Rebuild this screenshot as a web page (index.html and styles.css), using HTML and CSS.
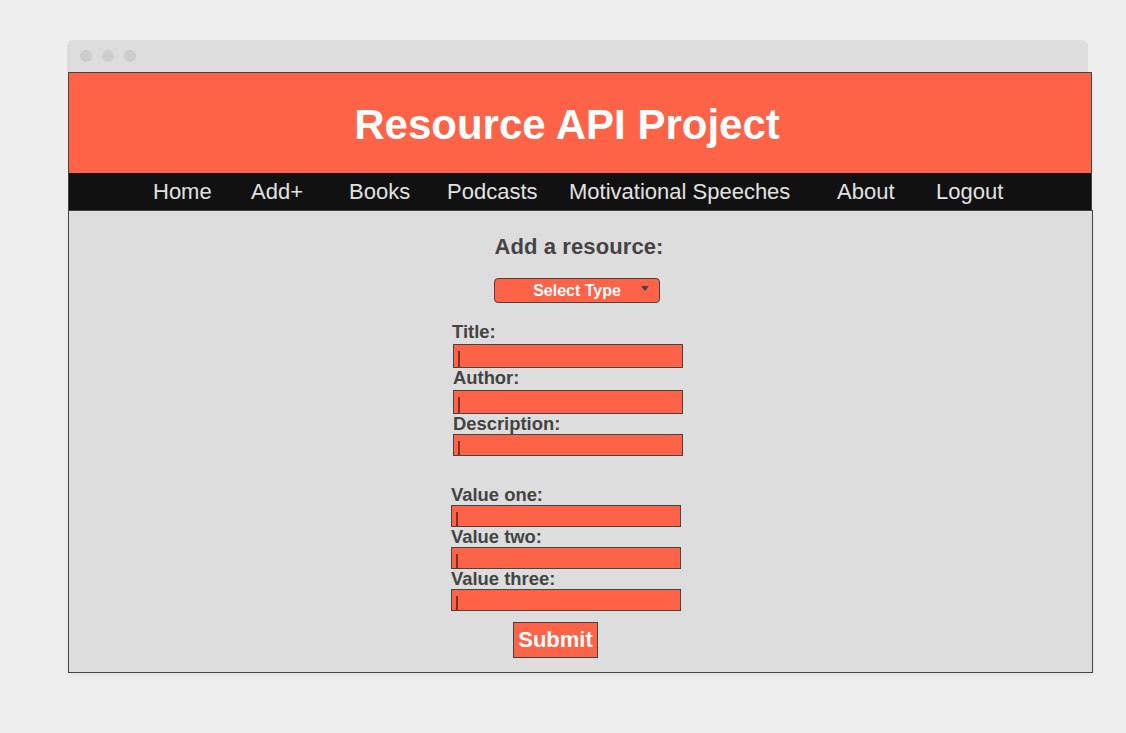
FILE: index.html
```html
<!DOCTYPE html>
<html lang="en">
<head>
<meta charset="utf-8">
<title>Resource API Project</title>
<link rel="stylesheet" href="styles.css">
</head>
<body>
<div class="window">
  <div class="toolbar">
    <span class="dot"></span><span class="dot"></span><span class="dot"></span>
  </div>
  <div class="page">
    <header class="site-header">
      <h1 class="site-title">Resource API Project</h1>
      <nav class="nav">
        <a class="nav-link" href="#">Home</a>
        <a class="nav-link" href="#">Add+</a>
        <a class="nav-link" href="#">Books</a>
        <a class="nav-link" href="#">Podcasts</a>
        <a class="nav-link" href="#">Motivational Speeches</a>
        <a class="nav-link" href="#">About</a>
        <a class="nav-link" href="#">Logout</a>
      </nav>
    </header>
    <main class="content">
      <h2 class="form-title">Add a resource:</h2>
      <div class="select-wrap">
        <select class="type-select">
          <option>Select Type</option>
          <option>Book</option>
          <option>Podcast</option>
          <option>Motivational Speech</option>
        </select>
      </div>
      <form class="form">
        <div class="group group-main">
          <label class="label">Title:</label>
          <input class="field field-tall" type="text">
          <label class="label">Author:</label>
          <input class="field field-tall" type="text">
          <label class="label">Description:</label>
          <input class="field" type="text">
        </div>
        <div class="group group-values">
          <label class="label">Value one:</label>
          <input class="field" type="text">
          <label class="label">Value two:</label>
          <input class="field" type="text">
          <label class="label">Value three:</label>
          <input class="field" type="text">
        </div>
        <button class="submit" type="button">Submit</button>
      </form>
    </main>
  </div>
</div>
</body>
</html>
```
FILE: styles.css
```css
html, body {
  margin: 0;
  padding: 0;
}
body {
  background: #eeeeee;
  font-family: "Liberation Sans", Arial, sans-serif;
  width: 1126px;
  height: 733px;
  overflow: hidden;
}
.window {
  margin-left: 67px;
  padding-top: 40px;
  width: 1021px;
}
.toolbar {
  height: 32px;
  background: #dddddd;
  border-radius: 6px 6px 0 0;
  display: flex;
  align-items: center;
  gap: 10px;
  padding-left: 13px;
  box-sizing: border-box;
}
.dot {
  width: 12px;
  height: 12px;
  border-radius: 50%;
  background: #cdcdcd;
}
.page {
  margin-left: 1px;
  width: 1025px;
}
.site-header {
  width: 1024px;
  box-sizing: border-box;
  border: 1px solid #444444;
  border-bottom: none;
  background: #ff6347;
}
.site-title {
  margin: 0;
  padding: 4px 26px 0 0;
  height: 100px;
  box-sizing: border-box;
  line-height: 96px;
  font-size: 42px;
  font-weight: bold;
  color: #ffffff;
  text-align: center;
}
.nav {
  background: #111111;
  height: 37px;
  box-sizing: border-box;
  padding-top: 1px;
  display: grid;
  grid-template-columns: 98px 98px 98px 122px 268px 99px auto;
  padding-left: 84px;
}
.nav-link {
  color: #e2e2e2;
  text-decoration: none;
  font-size: 22px;
  line-height: 36px;
  white-space: nowrap;
}
.content {
  width: 1025px;
  height: 463px;
  box-sizing: border-box;
  border: 1px solid #444444;
  background: #dddddd;
  padding-top: 23px;
  box-shadow: 0 2px 5px rgba(0, 0, 0, 0.05);
}
.form-title {
  margin: 0 0 0 -3px;
  font-size: 22px;
  line-height: 26px;
  font-weight: bold;
  color: #444444;
  text-align: center;
  letter-spacing: 0.1px;
}
.select-wrap {
  position: relative;
  margin-top: 18px;
  margin-left: 425px;
  width: 166px;
  height: 25px;
}
.select-wrap::after {
  content: "";
  position: absolute;
  right: 11px;
  top: 8px;
  width: 0;
  height: 0;
  border-left: 4px solid transparent;
  border-right: 4px solid transparent;
  border-top: 5px solid #444444;
  pointer-events: none;
}
.type-select {
  appearance: none;
  -webkit-appearance: none;
  width: 166px;
  height: 25px;
  box-sizing: border-box;
  margin: 0;
  padding: 0 4px;
  border: 1px solid #444444;
  border-radius: 4px;
  background: #ff6347;
  color: #ffffff;
  font-family: "Liberation Sans", Arial, sans-serif;
  font-size: 16px;
  font-weight: bold;
  text-align: center;
  text-align-last: center;
  outline: none;
}
.form {
  margin: 0;
  padding-top: 19px;
}
.group {
  display: flex;
  flex-direction: column;
  align-items: flex-start;
  width: 230px;
}
.group-main {
  margin-left: 384px;
}
.group-values {
  margin-left: 382px;
  margin-top: 29px;
}
.label {
  display: block;
  font-size: 18.4px;
  line-height: 20px;
  font-weight: bold;
  color: #444444;
}
.group-main .label:first-child {
  margin-left: -1px;
}
.field {
  display: block;
  width: 230px;
  height: 22px;
  box-sizing: border-box;
  margin: 0;
  padding: 0;
  border: 1px solid #444444;
  background: linear-gradient(#8a2c1c, #8a2c1c) no-repeat 4px 6px / 2px 16px, #ff6347;
  outline: none;
}
.field-tall {
  height: 24px;
  margin-top: 2px;
}
.submit {
  display: block;
  margin: 11px 0 0 444px;
  width: 85px;
  height: 36px;
  box-sizing: border-box;
  padding: 0;
  border: 1px solid #444444;
  background: #ff6347;
  color: #ffffff;
  font-family: "Liberation Sans", Arial, sans-serif;
  font-size: 22px;
  font-weight: bold;
  cursor: pointer;
}
```
